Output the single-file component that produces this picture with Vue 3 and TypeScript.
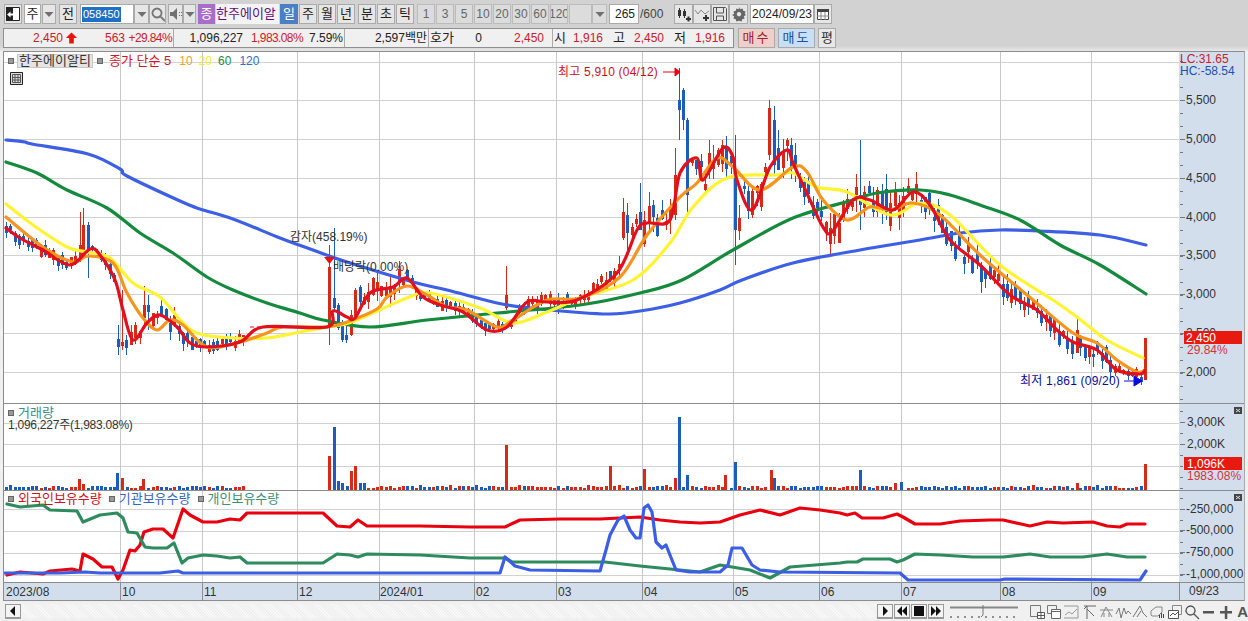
<script setup lang="ts">
type Pt = [number, number]
const parse = (s: string): Pt[] => s.trim().split(/\s+/).map(p => p.split(',').map(Number) as Pt)
const smooth = (s: string): string => {
  const p = parse(s)
  let d = `M${p[0][0]} ${p[0][1]}`
  for (let i = 0; i < p.length - 1; i++) {
    const a = p[Math.max(i - 1, 0)], b = p[i], c = p[i + 1], e = p[Math.min(i + 2, p.length - 1)]
    const c1x = b[0] + (c[0] - a[0]) / 6, c1y = b[1] + (c[1] - a[1]) / 6
    const c2x = c[0] - (e[0] - b[0]) / 6, c2y = c[1] - (e[1] - b[1]) / 6
    d += `C${c1x.toFixed(1)} ${c1y.toFixed(1)} ${c2x.toFixed(1)} ${c2y.toFixed(1)} ${c[0]} ${c[1]}`
  }
  return d
}

const ma120 = '6,140 25,142 32,144 88,154 120,169 127,176 180,201 200,209 233,219 280,238 313,250 347,262 413,282 447,290 497,303 530,308 573,312 610,314 640,311 680,303 720,290 742,280 793,263 860,250 920,240 960,233 1000,230 1040,231 1100,235 1146,245'
const ma60 = '6,162 37,173 67,190 107,208 140,233 173,253 207,277 233,290 267,303 300,313 323,320 370,327 427,320 497,313 580,305 640,293 682,280 733,250 793,218 853,200 877,193 920,190 950,195 980,205 1020,220 1060,245 1100,265 1146,294'
const ma20 = '6,204 33,225 67,247 87,252 110,258 133,283 160,297 183,323 200,334 233,338 267,338 300,332 327,327 352,322 407,298 430,293 480,308 513,323 547,312 580,298 633,280 670,243 693,207 727,178 777,175 793,173 817,187 847,192 890,215 920,203 950,215 1000,265 1053,300 1077,317 1107,340 1143,358'
const ma10 = '6,217 43,247 73,262 88,256 113,263 127,293 143,318 157,330 170,320 183,325 207,347 240,342 267,333 283,327 327,327 347,322 377,309 387,297 407,286 427,295 447,307 467,310 497,327 513,320 547,300 580,298 620,277 647,235 680,197 697,183 717,158 733,167 760,190 793,167 807,172 823,200 847,220 870,207 890,210 913,203 940,215 980,255 1033,300 1073,333 1097,343 1117,360 1137,372 1145,370'
const ma5 = '6,228 20,238 43,250 70,265 90,249 100,255 115,280 123,310 133,340 147,323 160,315 177,327 190,343 207,347 240,342 263,327 327,327 333,311 347,317 355,318 370,293 393,287 407,278 423,297 440,305 463,312 487,330 507,327 527,302 547,302 577,300 617,273 637,230 647,223 670,220 680,173 697,158 703,180 723,148 733,157 737,180 752,210 770,167 787,150 793,163 810,200 823,227 832,232 853,200 870,200 893,210 913,192 930,205 950,240 980,265 1010,295 1037,310 1057,330 1073,342 1097,350 1117,370 1140,374 1145,370'

const priceLines = [
  { c: '#3c5fe4', d: smooth(ma120) }, { c: '#138a3c', d: smooth(ma60) }, { c: '#fff333', d: smooth(ma20) },
  { c: '#f7941d', d: smooth(ma10) }, { c: '#e2101e', d: smooth(ma5) },
]
const flowLines = [
  { c: '#e8000e', p: '7,575 20,572 43,574 50,571 72,569 80,571 83,554 93,559 102,567 112,567 118,579 123,570 130,550 135,551 140,545 144,532 153,529 163,529 173,538 183,509 190,515 203,522 217,522 230,519 240,520 247,513 323,513 337,526 350,527 358,520 367,526 420,526 470,527 505,527 520,520 560,519 600,519 640,517 660,520 680,522 700,523 720,522 740,515 760,510 780,515 800,508 820,510 840,513 847,515 855,513 862,518 883,518 897,514 903,517 915,524 940,524 960,521 990,520 1003,520 1030,526 1047,522 1063,523 1093,522 1107,526 1120,527 1127,524 1145,524' },
  { c: '#2e8b5e', p: '7,504 20,507 43,505 50,510 77,511 83,522 100,515 117,513 123,518 128,532 137,533 145,547 153,548 167,548 174,543 182,563 188,558 203,555 217,556 230,558 240,557 247,563 323,563 337,554 350,555 358,557 367,554 420,555 470,558 505,558 512,562 560,562 605,562 640,566 680,570 700,572 720,565 750,570 770,578 790,567 840,563 847,562 857,562 863,559 890,559 897,562 903,560 915,554 940,555 973,557 987,557 1003,557 1030,554 1050,557 1083,557 1107,554 1127,557 1145,557' },
  { c: '#3c5ee4', p: '5,573 60,573 85,572 100,573 160,573 178,571 183,573 500,573 505,557 515,566 530,570 600,571 606,550 610,535 618,520 624,516 630,530 636,538 640,538 644,508 648,505 652,512 656,542 662,548 666,545 670,555 676,570 690,572 720,572 728,565 732,548 742,548 752,565 760,570 780,572 900,573 908,580 1000,580 1005,579 1140,580 1146,571' },
]

const ma5Pts = parse(ma5)
const at = (x: number): number => {
  for (let i = 1; i < ma5Pts.length; i++) {
    if (x <= ma5Pts[i][0]) {
      const [a, b] = [ma5Pts[i - 1], ma5Pts[i]]
      return a[1] + ((x - a[0]) / (b[0] - a[0])) * (b[1] - a[1])
    }
  }
  return ma5Pts[ma5Pts.length - 1][1]
}
let seed = 4711
const rnd = () => { seed = (seed * 16807) % 2147483647; return seed / 2147483647 }
const amp = (x: number) => x < 115 ? 8 : x < 200 ? 12 : x < 250 ? 8 : x < 400 ? 16 : x < 600 ? 8 : x < 620 ? 14 : x < 900 ? 24 : x < 1000 ? 18 : x < 1115 ? 14 : 6

type Ov = [number, number, number, number, number, string]
const overrides: Ov[] = [
  [80, 212, 262, 245, 258, 'r'], [83, 208, 258, 225, 258, 'r'], [88, 222, 278, 225, 250, 'b'],
  [118, 325, 355, 339, 347, 'b'], [122, 290, 350, 342, 346, 'r'], [126, 335, 355, 340, 348, 'b'], [131, 325, 345, 332, 345, 'r'], [144, 286, 325, 305, 318, 'r'], [148, 295, 330, 305, 312, 'b'],
  [329, 245, 345, 267, 327, 'r'], [334, 228, 310, 298, 308, 'b'], [338, 303, 330, 305, 328, 'b'], [342, 320, 342, 325, 340, 'b'], [346, 325, 343, 335, 340, 'b'], [351, 310, 336, 315, 335, 'r'], [355, 288, 320, 290, 318, 'r'], [360, 285, 305, 287, 302, 'b'],
  [506, 266, 310, 295, 308, 'r'],
  [623, 198, 240, 212, 238, 'r'], [627, 203, 250, 215, 233, 'b'], [640, 183, 230, 212, 230, 'b'],
  [675, 148, 220, 175, 215, 'r'], [679, 68, 140, 100, 110, 'b'], [683, 88, 130, 90, 120, 'b'], [687, 118, 215, 120, 195, 'b'],
  [735, 135, 265, 170, 230, 'b'], [739, 205, 240, 218, 231, 'r'],
  [769, 100, 160, 108, 155, 'r'], [774, 106, 175, 120, 165, 'b'], [778, 130, 170, 148, 170, 'b'],
  [860, 140, 230, 195, 205, 'b'], [1077, 319, 353, 330, 353, 'r'], [1141, 371, 385, 377, 382, 'b'], [1145, 338, 380, 338, 380, 'r'],
]
const volOv: [number, number, string][] = [
  [79, 479, 'r'], [83, 484, 'r'], [117, 473, 'b'], [122, 478, 'r'], [143, 479, 'r'], [329, 456, 'r'], [334, 427, 'b'], [338, 481, 'b'], [342, 483, 'b'], [351, 471, 'r'], [355, 466, 'r'], [360, 483, 'b'], [364, 483, 'b'],
  [506, 445, 'r'], [610, 466, 'r'], [644, 469, 'r'], [675, 478, 'r'], [679, 417, 'b'], [687, 475, 'b'], [725, 475, 'r'], [735, 462, 'b'], [771, 470, 'r'], [774, 478, 'b'], [860, 470, 'b'], [895, 483, 'r'], [901, 482, 'b'], [1077, 483, 'r'], [1145, 464, 'r'],
]

interface Candle { x: number; hi: number; lo: number; top: number; bot: number; col: string }
const candles: Candle[] = []
const vols: { x: number; top: number; col: string }[] = []
const RED = '#d52a17', BLUE = '#1d5cba'
for (let i = 0; i < 265; i++) {
  const x = Math.round(6 + i * 4.314)
  const flat = x > 247 && x < 326
  if (flat) continue
  const ov = overrides.find(o => Math.abs(o[0] - x) <= 2)
  let col: string
  if (ov) {
    candles.push({ x: ov[0], hi: ov[1], lo: ov[2], top: ov[3], bot: ov[4], col: ov[5] === 'r' ? RED : BLUE })
    col = ov[5] === 'r' ? RED : BLUE
  } else {
    const a = amp(x), base = at(x), dir = at(x + 4) - at(x - 4)
    col = rnd() < 0.5 + dir * 0.05 ? BLUE : RED
    const c = base + (rnd() - 0.5) * a
    const h = 1.5 + rnd() * a * 0.45
    const top = Math.round(c - h), bot = Math.round(c + h)
    candles.push({ x, top, bot, hi: Math.round(top - rnd() * a * 0.7), lo: Math.round(bot + rnd() * a * 0.7), col })
  }
  const vo = volOv.find(v => Math.abs(v[0] - x) <= 2)
  if (vo) vols.push({ x: vo[0], top: vo[1], col: vo[2] === 'r' ? RED : BLUE })
  else vols.push({ x, top: Math.round(488 - rnd() * 2.6), col })
}

const vGrid = [120, 202, 297, 379, 474, 556, 642, 733, 819, 901, 1000, 1091]
const priceGrid = [62, 100, 139, 178, 217, 255, 294, 333, 372]
const volGrid = [423, 444, 466]
const flowGrid = [509, 531, 553, 575]
const times = [['2023/08', 6], ['10', 122], ['11', 204], ['12', 299], ['2024/01', 380], ['02', 476], ['03', 558], ['04', 644], ['05', 735], ['06', 821], ['07', 903], ['08', 1002], ['09', 1093]] as [string, number][]

const priceLabels = [['5,500', 100], ['5,000', 139], ['4,500', 178], ['4,000', 217], ['3,500', 255], ['3,000', 294], ['2,500', 333], ['2,000', 372]] as [string, number][]
const volLabels = [['3,000K', 422], ['2,000K', 444]] as [string, number][]
const flowLabels = [['-250,000', 509], ['-500,000', 530], ['-750,000', 552], ['-1,000,000', 574]] as [string, number][]
const ticks = (from: number, to: number, step: number) => {
  const r: number[] = []
  for (let y = from; y < to; y += step) r.push(y)
  return r
}

type Shape = { d: string; f?: string; s?: string; w?: number }
const ic: Record<string, Shape[]> = {
  win: [{ d: 'M1.5 1.5h13v13h-13z', f: '#fff', s: '#222' }, { d: 'M1 1h7v14H1z', f: '#222' }, { d: 'M2 8.500l3.500-3v2h3.500v2H5.500v2z', f: '#fff' }],
  dd: [{ d: 'M3.500 6h9l-4.500 5z', f: '#707070' }],
  search: [{ d: 'M7 2.500a4.500 4.500 0 1 0 .01 0zM10.500 10.500l4.500 4.500', s: '#777', w: 1.800 }],
  spk: [{ d: 'M2 6h3l4-4v12L5 10H2z', f: '#707070' }, { d: 'M11 6h1v1h-1zM11 9h1v1h-1zM13 6h1v1h-1zM13 9h1v1h-1z', f: '#707070' }],
  cand: [{ d: 'M2 4h3v6H2zM7 5h3v5H7z', f: '#333' }, { d: 'M3 2h1v10H3zM8 3h1v9H8z', f: '#333' }, { d: 'M10 12h5v2h-5zM11.500 10.500h2v5h-2z', f: '#333' }],
  line: [{ d: 'M1 4l3 4 3-4 4 4 4-3', s: '#888' }, { d: 'M9 11h6v2H9zM11 9h2v6h-2z', f: '#333' }],
  save: [{ d: 'M1.500 1.500h12l1 1v12h-13zM4.500 2v5h7V2M4.500 14v-4h7v4', s: '#555' }],
  gear: [{ d: 'M8 1l1.200 2.200 2.400-.8.600 2.400 2.400.6-.8 2.400L15 9l-2.200 1.200.8 2.400-2.400.6-.6 2.400L8 14.800 5.400 15.600l-.6-2.400-2.400-.6.8-2.400L1 9l2.200-1.200-.8-2.400 2.400-.6.600-2.400 2.400.8zM8 6a2.200 2.200 0 1 0 .01 0z', f: '#666' }],
  cal: [{ d: 'M2.500 3.500h11v10h-11z', f: '#fff', s: '#444' }, { d: 'M2 3h12v3H2z', f: '#444' }, { d: 'M6 6v8M10 6v8M2 10h12', s: '#888' }],
  grid: [{ d: 'M1.500 1.500h10v11h-10z', s: '#777' }, { d: 'M8.500 8.500h7v6h-7zM12 8.500v6M8.500 11.500h7', s: '#555', f: '#fff' }],
  wins: [{ d: 'M1.500 1.500h9v8h-9z', s: '#777' }, { d: 'M5.500 5.500h9v9h-9zM5.500 7.500h9', s: '#666', f: '#fff' }],
  dots: [{ d: 'M1 2h14M1 14h14M15 2v12', s: '#999' }, { d: 'M2 11l4-3 3 2 5-5', s: '#999' }],
  t1: [{ d: 'M3 2h12M6 2v13M6 5l7 7M3 5l3-3', s: '#666' }],
  t2: [{ d: 'M2 6h13M8 3L3 13M8 3l6 10M6 13v-4M11 13v-4', s: '#888' }],
  t3: [{ d: 'M1 10l3-6 2 10 3-10 2 6 2-3 3 3', s: '#777' }],
  t4: [{ d: 'M1 13L8 2l3 7 4 4M5 13l4-6', s: '#777' }],
  t5: [{ d: 'M2 11V7l5-4h6v5l-4 4H3z', s: '#888' }, { d: 'M10 14h1v-3h-1zM12 14h1v-5h-1zM14 14h1v-4h-1z', f: '#444' }],
  t6: [{ d: 'M5.500 1.500h9v9h-9z', s: '#888' }, { d: 'M1.500 6.500h10v8h-10z', s: '#555', f: '#fff' }, { d: 'M3 12l3-3 2 2 3-3', s: '#555' }],
  glass: [{ d: 'M6.500 2a4.500 4.500 0 1 0 .01 0zM10 10l5 5', s: '#555', w: 1.300 }],
  minus: [{ d: 'M2 7h11v2.500H2z', f: '#555' }],
  plus: [{ d: 'M2 7h12v2.500H2zM6.800 2h2.500v13H6.800z', f: '#555' }],
  table: [{ d: 'M1.500 1.500h12v12h-12z', f: '#ddd', s: '#222' }, { d: 'M3.500 3.500h8v8h-8zM3.500 6.500h8M3.500 9h8M6 3.500v8M9 3.500v8', s: '#555' }],
}

interface Tb { t?: string; i?: string; w: number; m: number; k?: string }
const row1: Tb[] = [
  { i: 'win', w: 18, m: 0 }, { t: '주', w: 17, m: 2, k: 'white' }, { i: 'dd', w: 14, m: 1 }, { t: '전', w: 18, m: 3 },
  { t: 'CODE', w: 54, m: 3, k: 'code' }, { i: 'dd', w: 15, m: 0 }, { i: 'search', w: 17, m: 0 },
  { i: 'spk', w: 15, m: 2 }, { i: 'dd', w: 13, m: 0 },
  { t: '종', w: 17, m: 2, k: 'purple' }, { t: '한주에이알', w: 63, m: 1, k: 'name' },
  { t: '일', w: 18, m: 1, k: 'on' }, { t: '주', w: 18, m: 1 }, { t: '월', w: 18, m: 1 }, { t: '년', w: 18, m: 1 },
  { t: '분', w: 18, m: 3 }, { t: '초', w: 18, m: 1 }, { t: '틱', w: 18, m: 1 },
  { t: '1', w: 18, m: 3, k: 'dim' }, { t: '3', w: 18, m: 1, k: 'dim' }, { t: '5', w: 18, m: 1, k: 'dim' }, { t: '10', w: 18, m: 1, k: 'dim' },
  { t: '20', w: 18, m: 1, k: 'dim' }, { t: '30', w: 18, m: 1, k: 'dim' }, { t: '60', w: 18, m: 1, k: 'dim' }, { t: '120', w: 18, m: 1, k: 'dim' },
  { t: '', w: 23, m: 1, k: 'dim' }, { i: 'dd', w: 15, m: 0, k: 'dim' },
  { t: '265', w: 30, m: 2, k: 'num' }, { t: '/600', w: 28, m: 1, k: 'plain' },
  { i: 'cand', w: 19, m: 6 }, { i: 'line', w: 18, m: 0 }, { i: 'save', w: 18, m: 0 }, { i: 'gear', w: 19, m: 0 },
  { t: '2024/09/23', w: 64, m: 2, k: 'white' }, { i: 'cal', w: 18, m: 0 },
]

interface Cell { t?: string; w: number; r?: boolean; c?: string; b?: boolean; arrow?: boolean }
const R = '#c8202c'
const row2: Cell[] = [
  { t: '2,450', w: 60, r: true, c: R }, { arrow: true, w: 15 }, { t: '563', w: 47, r: true, c: R }, { t: '+29.84%', w: 48, r: true, c: R, b: true },
  { t: '1,096,227', w: 70, r: true }, { t: '1,983.08%', w: 60, r: true, c: R }, { t: '7.59%', w: 41, r: true, b: true },
  { t: '2,597백만', w: 84, r: true, b: true }, { t: '호가', w: 27 }, { t: '0', w: 27, r: true },
  { t: '2,450', w: 62, r: true, c: R }, { w: 8, b: true },
  { t: '시', w: 15 }, { t: '1,916', w: 36, r: true, c: R }, { t: '고', w: 22, r: true }, { t: '2,450', w: 39, r: true, c: R },
  { t: '저', w: 22, r: true }, { t: '1,916', w: 39, r: true, c: R },
]
const hangul = (s?: string) => !!s && /^[가-힣]+$/.test(s)
const tight = (s?: string) => !!s && s.includes('%') && s.length > 6
const tools = ['grid', 'wins', 'dots', 't1', 't2', 't3', 't4', 't5', 't6', 'glass', 'minus', 'plus']
</script>

<template>
  <div class="app">
    <div class="row1">
      <div v-for="(b, n) in row1" :key="n" class="tb" :class="[b.k, { ko: hangul(b.t) }]" :style="{ width: b.w + 'px', marginLeft: b.m + 'px' }">
        <svg v-if="b.i" class="ticon" width="16" height="16" viewBox="0 0 16 16" fill="none">
          <path v-for="(s, j) in ic[b.i]" :key="j" :d="s.d" :fill="s.f || 'none'" :stroke="s.s || 'none'" :stroke-width="s.w || 1" />
        </svg>
        <span v-else-if="b.t === 'CODE'" class="sel">058450</span>
        <template v-else>{{ b.t }}</template>
      </div>
    </div>

    <div class="row2">
      <div class="quote">
        <div v-for="(c, n) in row2" :key="n" class="cell" :class="{ right: c.r, div: c.b, ko: hangul(c.t), tight: tight(c.t) }" :style="{ width: c.w + 'px', color: c.c }">
          <svg v-if="c.arrow" width="14" height="14" viewBox="0 0 14 14"><path d="M7 1l6 6H9.500v6h-5V7H1z" fill="#e8140c" /></svg>
          <template v-else>{{ c.t }}</template>
        </div>
      </div>
      <div class="trade buy">매수</div>
      <div class="trade sell">매도</div>
      <div class="trade flat">평</div>
    </div>

    <div class="chart">
      <!-- price -->
      <section class="panel p1">
        <div class="plot">
          <svg class="draw" width="1175" height="351" viewBox="4 52 1175 351">
            <g shape-rendering="crispEdges">
              <line v-for="y in priceGrid" :key="y" x1="4" x2="1179" :y1="y + 0.5" :y2="y + 0.5" class="gh" />
              <line v-for="x in vGrid" :key="x" :x1="x + 0.5" :x2="x + 0.5" y1="52" y2="403" class="gv" />
              <g v-for="(c, n) in candles" :key="n">
                <rect :x="c.x" :y="c.hi" width="1" :height="c.lo - c.hi" :fill="c.col" />
                <rect :x="c.x - 1" :y="c.top" width="3" :height="c.bot - c.top" :fill="c.col" />
              </g>
            </g>
            <path v-for="l in priceLines" :key="l.c" :d="l.d" :stroke="l.c" class="ma" />
            <polyline points="250,327 327,327" stroke="#e2101e" stroke-width="1" stroke-dasharray="4 3" fill="none" />
            <text x="290" y="241" class="note dark">감자(458.19%)</text>
            <path d="M324 257h11l-5.500 7z" fill="#e8140c" />
            <text x="333" y="271" class="note dark">배당락(0.00%)</text>
            <text x="558" y="76" class="note hi">최고 5,910 (04/12)</text>
            <path d="M663 72h12M675 68v8l5-4z" stroke="#e8000e" fill="#e8000e" />
            <text x="1020" y="385" class="note lo">최저 1,861 (09/20)</text>
            <path d="M1124 381h12M1134 376v10l8-5z" stroke="#0a0ae0" fill="#0a0ae0" />
          </svg>
          <div class="legend">
            <i class="sq" /><span class="name-tag">한주에이알티</span><i class="sq s2" />
            <span class="lg main">종가 단순 5</span>
            <span class="lg num c10">10</span>
            <span class="lg num c20">20</span>
            <span class="lg num c60">60</span>
            <span class="lg num c120">120</span>
          </div>
          <svg class="tablebtn" width="15" height="15" viewBox="0 0 15 15">
            <path v-for="(s, j) in ic.table" :key="j" :d="s.d" :fill="s.f || 'none'" :stroke="s.s || 'none'" />
          </svg>
        </div>
        <svg class="axis" width="65" height="351" viewBox="1179 52 65 351">
          <g shape-rendering="crispEdges">
            <line v-for="y in ticks(48, 403, 13)" :key="y" x1="1180" x2="1183" :y1="y" :y2="y" class="tk" />
            <line v-for="l in priceLabels" :key="l[1]" x1="1180" x2="1185" :y1="l[1]" :y2="l[1]" class="tk" />
          </g>
          <text x="1180" y="63" class="ax red">LC:31.65</text>
          <text x="1180" y="75" class="ax blue">HC:-58.54</text>
          <text v-for="l in priceLabels" :key="l[0]" x="1186" :y="l[1] + 4" class="ax">{{ l[0] }}</text>
          <rect x="1184" y="331" width="58" height="13" fill="#e8190f" />
          <text x="1186" y="342" class="ax white">2,450</text>
          <text x="1187" y="354" class="ax pink">29.84%</text>
        </svg>
      </section>

      <!-- volume -->
      <section class="panel p2">
        <div class="plot">
          <svg class="draw" width="1175" height="86" viewBox="4 404 1175 86" shape-rendering="crispEdges">
            <line v-for="y in volGrid" :key="y" x1="4" x2="1179" :y1="y + 0.5" :y2="y + 0.5" class="gh" />
            <line v-for="x in vGrid" :key="x" :x1="x + 0.5" :x2="x + 0.5" y1="404" y2="490" class="gv" />
            <rect v-for="(v, n) in vols" :key="n" :x="v.x - 1" :y="v.top" width="3" :height="490 - v.top" :fill="v.col" />
          </svg>
          <div class="legend l2">
            <i class="sq" /><span class="lg teal">거래량</span>
          </div>
          <div class="vol-text">1,096,227주(1,983.08%)</div>
        </div>
        <svg class="axis" width="65" height="86" viewBox="1179 404 65 86">
          <g shape-rendering="crispEdges">
            <line v-for="y in ticks(411, 490, 11)" :key="y" x1="1180" x2="1183" :y1="y" :y2="y" class="tk" />
            <line v-for="l in volLabels" :key="l[1]" x1="1180" x2="1185" :y1="l[1]" :y2="l[1]" class="tk" />
          </g>
          <text v-for="l in volLabels" :key="l[0]" x="1187" :y="l[1] + 4" class="ax">{{ l[0] }}</text>
          <rect x="1184" y="457" width="58" height="13" fill="#e8190f" />
          <text x="1187" y="468" class="ax white">1,096K</text>
          <text x="1187" y="480" class="ax pink">1983.08%</text>
          <rect x="1234" y="407" width="8" height="7" fill="#444" />
          <path d="M1236 409l4 3M1240 409l-4 3" stroke="#ddd" />
        </svg>
      </section>

      <!-- holdings -->
      <section class="panel p3">
        <div class="plot">
          <svg class="draw" width="1175" height="91" viewBox="4 491 1175 91">
            <g shape-rendering="crispEdges">
              <line v-for="y in flowGrid" :key="y" x1="4" x2="1179" :y1="y + 0.5" :y2="y + 0.5" class="gh" />
              <line v-for="x in vGrid" :key="x" :x1="x + 0.5" :x2="x + 0.5" y1="491" y2="582" class="gv" />
            </g>
            <polyline v-for="l in flowLines" :key="l.c" :points="l.p" :stroke="l.c" class="ma" />
          </svg>
          <div class="legend l3">
            <i class="sq" /><span class="lg fr">외국인보유수량</span>
            <i class="sq" /><span class="lg ins">기관보유수량</span>
            <i class="sq" /><span class="lg ind">개인보유수량</span>
          </div>
        </div>
        <svg class="axis" width="65" height="91" viewBox="1179 491 65 91">
          <g shape-rendering="crispEdges">
            <line v-for="y in ticks(498, 582, 11)" :key="y" x1="1180" x2="1183" :y1="y" :y2="y" class="tk" />
            <line v-for="l in flowLabels" :key="l[1]" x1="1180" x2="1185" :y1="l[1]" :y2="l[1]" class="tk" />
          </g>
          <text v-for="l in flowLabels" :key="l[0]" x="1186" :y="l[1] + 4" class="ax">{{ l[0] }}</text>
          <rect x="1234" y="494" width="8" height="7" fill="#444" />
          <path d="M1236 496l4 3M1240 496l-4 3" stroke="#ddd" />
        </svg>
      </section>

      <!-- time axis -->
      <section class="panel p4">
        <svg class="draw time" width="1175" height="17" viewBox="4 583 1175 17">
          <line v-for="x in vGrid" :key="x" :x1="x + 0.5" :x2="x + 0.5" y1="583" y2="600" stroke="#8a8f98" shape-rendering="crispEdges" />
          <text v-for="t in times" :key="t[0]" :x="t[1]" y="596" class="ax">{{ t[0] }}</text>
        </svg>
        <div class="time-end">09/23</div>
      </section>
    </div>

    <div class="scroll">
      <button class="arrow"><svg width="8" height="10" viewBox="0 0 8 10"><path d="M6 0v10L1 5z" fill="#111" /></svg></button>
      <div class="track" />
      <button class="arrow"><svg width="8" height="10" viewBox="0 0 8 10"><path d="M2 0v10l5-5z" fill="#111" /></svg></button>
      <button class="arrow"><svg width="12" height="10" viewBox="0 0 12 10"><path d="M6 0v10L1 5zM11 0v10L6 5z" fill="#111" /></svg></button>
      <button class="arrow"><svg width="10" height="10" viewBox="0 0 10 10"><path d="M0 0h10v10H0z" fill="#111" /></svg></button>
      <button class="arrow"><svg width="12" height="10" viewBox="0 0 12 10"><path d="M1 0v10l5-5zM6 0v10l5-5z" fill="#111" /></svg></button>
      <svg class="slider" width="70" height="15" viewBox="0 0 70 15">
        <path d="M0 3.500h68" stroke="#888" stroke-width="2" />
        <path d="M33 1v10l-2 2" stroke="#777" fill="none" />
        <path d="M1 12v2M8 12v2M15 12v2M22 12v2M29 12v2M36 12v2M43 12v2M50 12v2M57 12v2M64 12v2" stroke="#333" />
      </svg>
      <div class="tools">
        <svg v-for="t in tools" :key="t" width="16" height="16" viewBox="0 0 16 16">
          <path v-for="(s, j) in ic[t]" :key="j" :d="s.d" :fill="s.f || 'none'" :stroke="s.s || 'none'" :stroke-width="s.w || 1" />
        </svg>
        <span class="big-a">A</span>
      </div>
    </div>
  </div>
</template>

<style>
html, body { margin: 0; background: #f0f0f0; overflow: hidden; }
</style>

<style scoped>
.app {
  width: 1248px; height: 621px; overflow: hidden; background: #f0f0f0;
  font: 12px/14px "Liberation Sans", "Noto Sans CJK KR", sans-serif; color: #222;
  display: flex; flex-direction: column;
}
.row1 {
  height: 26px; box-sizing: border-box; padding: 4px 0 2px 4px;
  background: #d2d2d2; display: flex; align-items: stretch;
}
.tb {
  box-sizing: border-box; flex: none; display: flex; align-items: center; justify-content: center;
  border: 1px solid #aaa; background: #e6e6e6; font-size: 12px; color: #222; white-space: nowrap; overflow: hidden;
}
.ko { font-size: 13px; }
.ticon { flex: none; }
.tb.white, .tb.code, .tb.num { background: #fff; }
.tb.code { justify-content: flex-start; padding-left: 1px; }
.sel { background: #1f6fc4; color: #fff; padding: 0 1px; font-size: 11px; line-height: 15px; width: 37px; }
.tb.purple { background: #a86cc9; color: #fff; border-color: #a86cc9; }
.tb.name { background: #f4f4f4; color: #5c0f78; border: 0; font-size: 13px; justify-content: flex-start; }
.tb.on { background: #4a7fc4; color: #fff; border-color: #4a7fc4; }
.tb.dim { background: #dcdcdc; color: #666; border-color: #bbb; }
.tb.num { justify-content: flex-end; padding-right: 3px; }
.tb.plain { background: none; border: 0; color: #444; justify-content: flex-start; }
.row2 {
  height: 25px; box-sizing: border-box; padding: 2px 0 3px 3px;
  display: flex; background: linear-gradient(#d2d2d2 80%, #e8e8e8);
}
.quote {
  width: 731px; box-sizing: border-box; display: flex; flex: none;
  background: #f0f0f0; border: 1px solid #8f8f8f;
}
.cell { box-sizing: border-box; flex: none; display: flex; align-items: center; white-space: nowrap; padding: 0 1px; }
.cell.right { justify-content: flex-end; }
.cell.div { border-right: 1px solid #aaa; }
.cell.tight { letter-spacing: -0.6px; }
.trade {
  flex: none; box-sizing: border-box; display: flex; align-items: center; justify-content: center;
  border: 1px solid #aaa; margin-left: 3px; width: 37px; letter-spacing: 2px; color: #333; font-size: 13px;
}
.buy { background: #f0cfc8; margin-left: 4px; color: #a02030; }
.sell { background: #c8dff5; color: #1c50a0; }
.flat { width: 18px; background: #e8e8e8; letter-spacing: 0; }
.chart {
  margin: 0 3px; width: 1242px; box-sizing: border-box; flex: none;
  border: 1px solid #8c8c8c; border-right-color: #a9a9a9; background: #fff;
}
.panel { display: flex; box-sizing: border-box; border-bottom: 1px solid #8c8c8c; }
.p1 { height: 352px; }
.p2 { height: 87px; }
.p3 { height: 92px; }
.p4 { height: 17px; border-bottom: 0; background: #d3deec; }
.plot { position: relative; width: 1175px; flex: none; }
.draw { display: block; background: #fff; }
.draw.time { background: #d3deec; flex: none; }
.axis { display: block; flex: none; background: #d3deec; border-left: 1px solid #8c8c8c; margin-left: -1px; }
.time-end { flex: none; width: 65px; box-sizing: border-box; border-left: 1px solid #8c8c8c; padding-left: 9px; line-height: 17px; color: #333; }
.gh { stroke: #d2d2d2; }
.gv { stroke: #c8c8cc; }
.tk { stroke: #777; }
.ma { fill: none; stroke-width: 3.2; stroke-linejoin: round; stroke-linecap: round; }
.note { font: 12px "Liberation Sans", "Noto Sans CJK KR", sans-serif; }
.dark { fill: #333; }
.hi { fill: #c8101c; letter-spacing: 0.2px; }
.lo { fill: #0a0a96; letter-spacing: 0.2px; }
.ax { font: 12px "Liberation Sans", "Noto Sans CJK KR", sans-serif; fill: #333; }
.ax.red { fill: #c8202c; }
.ax.blue { fill: #1c50b4; }
.ax.white { fill: #fff; }
.ax.pink { fill: #d0343c; }
.legend { position: absolute; left: 4px; top: 2px; display: flex; align-items: center; height: 14px; white-space: nowrap; }
.l3 { top: 1px; }
.sq { width: 4px; height: 4px; background: #999; border: 1px solid #666; margin-right: 4px; flex: none; }
.s2 { margin-right: 6px; }
.name-tag { background: #e4e4e4; border: 1px solid #c8c8c8; width: 76px; box-sizing: border-box; line-height: 12px; margin: 0 4px 0 -1px; color: #333; font-size: 13px; text-align: center; }
.lg { font-size: 13px; }
.lg.num { font-size: 12px; margin-right: 6px; }
.main { color: #d0142c; margin-right: 8px; }
.c10 { color: #f0a030; }
.c20 { color: #f4ee30; }
.c60 { color: #1e8a40; margin-right: 8px !important; }
.c120 { color: #3a6cc0; }
.teal { color: #3c8c88; }
.l3 .lg { margin-right: 7px; }
.fr { color: #d0101c; }
.ins { color: #3468c0; }
.ind { color: #3a9078; }
.vol-text { position: absolute; left: 4px; top: 14px; color: #333; white-space: nowrap; letter-spacing: -0.25px; }
.tablebtn { position: absolute; left: 5px; top: 19px; }
.scroll { height: 17px; margin-left: 4px; display: flex; align-items: flex-start; padding-top: 3px; }
.arrow {
  box-sizing: border-box; width: 16px; height: 15px; padding: 0; flex: none;
  border: 1px solid #999; border-width: 1px 1px 2px 1px; background: #f4f4f4; display: flex; align-items: center; justify-content: center;
  margin-left: 1px;
}
.track { width: 855px; height: 14px; flex: none; background: repeating-linear-gradient(45deg, #efefef 0 1px, #f8f8f8 1px 2px); }
.slider { margin-left: 6px; flex: none; }
.tools { display: flex; align-items: center; gap: 1.200px; margin-left: 9px; }
.big-a { font-weight: bold; font-size: 15px; color: #555; margin-left: 2px; }
</style>
